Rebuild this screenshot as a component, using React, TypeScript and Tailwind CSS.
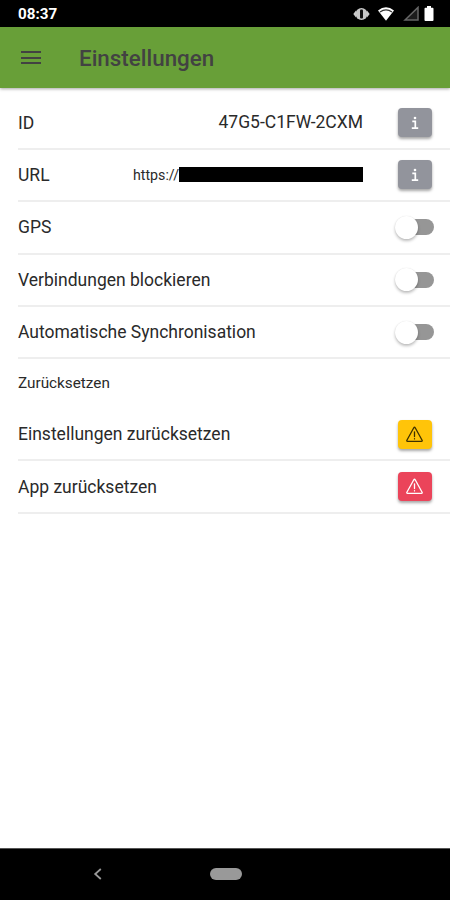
import type { ReactNode } from "react"

type Tone = "medium" | "warning" | "danger"

const tones: Record<Tone, string> = {
  medium: "bg-[#92949c] text-white",
  warning: "bg-[#ffc409] text-[#3d3000]",
  danger: "bg-[#eb445a] text-white",
}

function StatusBar() {
  return (
    <div className="flex h-[27px] shrink-0 items-center justify-between bg-black pl-[18px] pr-[16px] text-white">
      <span className="pt-[3px] text-[15.2px] font-bold leading-none">08:37</span>
      <div className="flex items-center">
        <svg width="17" height="14" viewBox="0 0 17 14">
          <path d="M.3 7 3.2 3.2v7.6zM16.7 7l-2.9-3.8v7.6z" fill="#ccc" />
          <circle cx="8.5" cy="7" r="6" fill="#c8c8c8" />
          <rect x="7" y="2.6" width="3" height="8.8" rx="1" fill="#111" />
        </svg>
        <svg className="ml-[7px]" width="18" height="14" viewBox="0 0 18 14">
          <path d="M1 3.6Q9-3 17 3.6L9 13.8z" fill="#fff" />
          <path d="M3 4.9Q9 .8 15 4.9" fill="none" stroke="#333" strokeWidth="1.2" />
        </svg>
        <svg className="ml-[8px]" width="17" height="15" viewBox="0 0 17 15">
          <path d="M2 14 15 1.4V14z" fill="#1c1c1c" stroke="#666" strokeWidth="1.5" />
        </svg>
        <svg className="ml-[4px]" width="10" height="15" viewBox="0 0 10 15">
          <path d="M3 0h4v1.8h1.6q.9 0 .9.9v11.4q0 .9-.9.9H1.4q-.9 0-.9-.9V2.7q0-.9.9-.9H3z" fill="#fff" />
        </svg>
      </div>
    </div>
  )
}

function Row({ label, children }: { label: string; children: ReactNode }) {
  return (
    <li className="ml-[18px] flex h-[52.4px] items-center border-b-2 border-[#eeeeee] pr-[16px]">
      <span className="pt-[1.5px] text-[17.5px] leading-none">{label}</span>
      <div className="ml-auto flex items-center">{children}</div>
    </li>
  )
}

function IconButton({ tone, label, children }: { tone: Tone; label: string; children: ReactNode }) {
  return (
    <button
      aria-label={label}
      className={`mr-[2px] flex h-[29px] w-[34px] items-center justify-center rounded-[4px] shadow-[0_2px_3px_rgba(0,0,0,0.35)] ${tones[tone]}`}
    >
      {children}
    </button>
  )
}

function InfoIcon() {
  return (
    <svg className="mr-px" width="10" height="14" viewBox="0 0 10 14" fill="none" stroke="currentColor" strokeWidth="1.7">
      <path d="M2.3 5.3h3v6.6M1.8 12.2h6.4" />
      <circle cx="5" cy="2" r="1.3" fill="currentColor" stroke="none" />
    </svg>
  )
}

function WarningIcon() {
  return (
    <svg width="18" height="17" viewBox="0 0 18 17" fill="none" stroke="currentColor" strokeWidth="1.3" strokeLinejoin="round" strokeLinecap="round">
      <path d="M7.8 1.8.9 14.2q-.5 1.1.6 1.1h14q1.1 0 .6-1.1L9.2 1.8q-.7-1.1-1.4 0z" />
      <path d="M8.5 5.8v4.7M8.5 12.7v.2" />
    </svg>
  )
}

function Toggle() {
  return (
    <button role="switch" aria-checked="false" className="flex items-center">
      <span className="z-10 size-[23px] rounded-full bg-white shadow-[0_2px_3px_rgba(0,0,0,0.25),0_0_1px_rgba(0,0,0,0.12)]" />
      <span className="-ml-[7px] h-[16px] w-[23px] rounded-r-full bg-[#969696]" />
    </button>
  )
}

export default function App() {
  return (
    <div className="flex h-[900px] w-[450px] flex-col overflow-hidden bg-white font-['Roboto',sans-serif] text-[#2a2a2a]">
      <StatusBar />

      <header className="z-10 flex h-[61px] shrink-0 items-center bg-[#689f38] pl-[21px] text-[#424242] shadow-[0_1px_3px_rgba(0,0,0,0.35)]">
        <button aria-label="Menü" className="flex flex-col gap-[3.5px]">
          <span className="h-[2px] w-[20px] bg-current" />
          <span className="h-[2px] w-[20px] bg-current" />
          <span className="h-[2px] w-[20px] bg-current" />
        </button>
        <h1 className="ml-[38px] pt-px text-[22.4px] font-medium leading-none">Einstellungen</h1>
      </header>

      <main className="flex-1 pt-[9.4px]">
        <ul>
          <Row label="ID">
            <span className="mr-[35px] pt-px text-[17.5px] leading-none">47G5-C1FW-2CXM</span>
            <IconButton tone="medium" label="ID Info"><InfoIcon /></IconButton>
          </Row>
          <Row label="URL">
            <span className="text-[14.2px] leading-none">https://</span>
            <span className="mr-[35px] h-[15px] w-[184px] bg-black" />
            <IconButton tone="medium" label="URL Info"><InfoIcon /></IconButton>
          </Row>
          <Row label="GPS"><Toggle /></Row>
          <Row label="Verbindungen blockieren"><Toggle /></Row>
          <Row label="Automatische Synchronisation"><Toggle /></Row>
        </ul>

        <h2 className="flex h-[49.6px] items-center pl-[18px] text-[15.3px] font-normal leading-none">Zurücksetzen</h2>

        <ul>
          <Row label="Einstellungen zurücksetzen">
            <IconButton tone="warning" label="Einstellungen zurücksetzen"><WarningIcon /></IconButton>
          </Row>
          <Row label="App zurücksetzen">
            <IconButton tone="danger" label="App zurücksetzen"><WarningIcon /></IconButton>
          </Row>
        </ul>
      </main>

      <nav className="flex h-[52px] shrink-0 items-center border-t border-[#555] bg-black pb-px">
        <svg className="ml-[93px]" width="9" height="12" viewBox="0 0 9 12" fill="none" stroke="#999" strokeWidth="1.8">
          <path d="M7.8 1 2.2 6l5.6 5" />
        </svg>
        <span className="ml-[108px] h-[12px] w-[32px] rounded-full bg-[#999]" />
      </nav>
    </div>
  )
}
